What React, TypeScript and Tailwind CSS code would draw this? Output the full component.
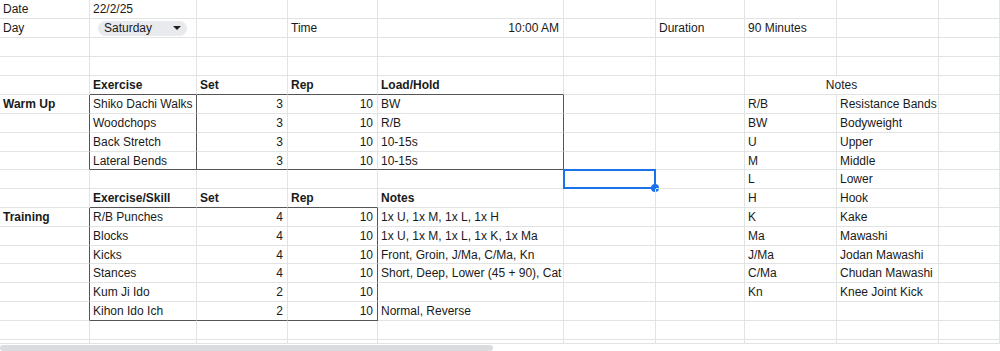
import React from "react";

type Cell = { t?: string; b?: boolean; r?: boolean };

// column widths, each includes its 1px right gridline
const colW = [
  "w-[90px]",
  "w-[107px]",
  "w-[91px]",
  "w-[90px]",
  "w-[186px]",
  "w-[92px]",
  "w-[89px]",
  "w-[92px]",
  "w-[102px]",
  "flex-1",
];

const rowH = [
  "h-[19px]", "h-[19px]", "h-[19px]", "h-[19px]", "h-[19px]", "h-[19px]",
  "h-[19px]", "h-[19px]", "h-[18px]", "h-[19px]", "h-[19px]", "h-[19px]",
  "h-[19px]", "h-[18px]", "h-[19px]", "h-[19px]", "h-[19px]", "h-[19px]",
];

const legend: [string, string][] = [
  ["R/B", "Resistance Bands"],
  ["BW", "Bodyweight"],
  ["U", "Upper"],
  ["M", "Middle"],
  ["L", "Lower"],
  ["H", "Hook"],
  ["K", "Kake"],
  ["Ma", "Mawashi"],
  ["J/Ma", "Jodan Mawashi"],
  ["C/Ma", "Chudan Mawashi"],
  ["Kn", "Knee Joint Kick"],
];

const warmUp = [
  ["Shiko Dachi Walks", "3", "10", "BW"],
  ["Woodchops", "3", "10", "R/B"],
  ["Back Stretch", "3", "10", "10-15s"],
  ["Lateral Bends", "3", "10", "10-15s"],
];

const training = [
  ["R/B Punches", "4", "10", "1x U, 1x M, 1x L, 1x H"],
  ["Blocks", "4", "10", "1x U, 1x M, 1x L, 1x K, 1x Ma"],
  ["Kicks", "4", "10", "Front, Groin, J/Ma, C/Ma, Kn"],
  ["Stances", "4", "10", "Short, Deep, Lower (45 + 90), Cat"],
  ["Kum Ji Ido", "2", "10", ""],
  ["Kihon Ido Ich", "2", "10", "Normal, Reverse"],
];

function buildRows(): Cell[][] {
  const rows: Cell[][] = Array.from({ length: 18 }, () =>
    Array.from({ length: 10 }, () => ({}))
  );
  rows[0][0] = { t: "Date" };
  rows[0][1] = { t: "22/2/25" };
  rows[1][0] = { t: "Day" };
  rows[1][3] = { t: "Time" };
  rows[1][4] = { t: "10:00 AM", r: true };
  rows[1][6] = { t: "Duration" };
  rows[1][7] = { t: "90 Minutes" };

  rows[4][1] = { t: "Exercise", b: true };
  rows[4][2] = { t: "Set", b: true };
  rows[4][3] = { t: "Rep", b: true };
  rows[4][4] = { t: "Load/Hold", b: true };
  rows[5][0] = { t: "Warm Up", b: true };
  warmUp.forEach((w, i) => {
    rows[5 + i][1] = { t: w[0] };
    rows[5 + i][2] = { t: w[1], r: true };
    rows[5 + i][3] = { t: w[2], r: true };
    rows[5 + i][4] = { t: w[3] };
  });

  rows[10][1] = { t: "Exercise/Skill", b: true };
  rows[10][2] = { t: "Set", b: true };
  rows[10][3] = { t: "Rep", b: true };
  rows[10][4] = { t: "Notes", b: true };
  rows[11][0] = { t: "Training", b: true };
  training.forEach((w, i) => {
    rows[11 + i][1] = { t: w[0] };
    rows[11 + i][2] = { t: w[1], r: true };
    rows[11 + i][3] = { t: w[2], r: true };
    rows[11 + i][4] = { t: w[3] };
  });

  legend.forEach(([k, v], i) => {
    rows[5 + i][7] = { t: k };
    rows[5 + i][8] = { t: v };
  });
  return rows;
}

const rightDark = (r: number, c: number) =>
  (r >= 5 && r <= 8 && (c === 0 || c === 1 || c === 4)) ||
  (r >= 11 && r <= 16 && (c === 0 || c === 3));

const bottomDark = (r: number, c: number) =>
  ((r === 4 || r === 8) && c >= 1 && c <= 4) ||
  ((r === 10 || r === 16) && c >= 1 && c <= 3);

const DayChip = () => (
  <div className="ml-[5px] flex h-[15px] w-[89px] items-center justify-between rounded-full bg-[#e8eaed] pl-[6px] pr-[6px]">
    <span className="text-[12px] leading-none">Saturday</span>
    <svg width="8" height="4" viewBox="0 0 8 4">
      <path d="M0 0h8L4 4z" fill="#1f1f1f" />
    </svg>
  </div>
);

const Selection = () => (
  <div className="absolute -left-[1px] -top-[1px] h-[20px] w-[93px] border-2 border-[#1a73e8]">
    <div className="absolute -bottom-[5px] -right-[5px] h-[8px] w-[8px] rounded-full bg-[#1a73e8]" />
  </div>
);

export default function App() {
  const rows = buildRows();

  return (
    <div className="h-[351px] w-[1000px] overflow-hidden bg-white font-['Liberation_Sans',Arial,sans-serif] text-[12px] text-[#1a1a1a]">
      {rows.map((row, r) => (
        <div key={r} className={`flex ${rowH[r]}`}>
          {row.map((cell, c) => {
            if (r === 4 && c === 8) return null;
            if (r === 4 && c === 7) {
              return (
                <div
                  key={c}
                  className="flex w-[194px] shrink-0 items-center justify-center border-b border-r border-b-[#e2e3e3] border-r-[#e2e3e3]"
                >
                  Notes
                </div>
              );
            }
            const br = rightDark(r, c) ? "border-r-[#555]" : "border-r-[#e2e3e3]";
            const bb = bottomDark(r, c) ? "border-b-[#555]" : "border-b-[#e2e3e3]";
            return (
              <div
                key={c}
                className={`relative flex shrink-0 items-center whitespace-nowrap border-b border-r ${colW[c]} ${br} ${bb} ${
                  cell.r ? "justify-end pr-[4px]" : "pl-[3px]"
                } ${cell.b ? "font-bold" : ""}`}
              >
                {r === 1 && c === 1 ? <DayChip /> : cell.t}
                {r === 9 && c === 5 && <Selection />}
              </div>
            );
          })}
        </div>
      ))}
      {/* partial row peeking above the scrollbar */}
      <div className="flex h-[4px]">
        {colW.map((w, c) => (
          <div key={c} className={`shrink-0 border-b border-r border-[#e2e3e3] ${w}`} />
        ))}
      </div>
      <div className="h-[7px] bg-white pt-[1px]">
        <div className="h-[6px] w-[493px] rounded-full bg-[#dadce0]" />
      </div>
    </div>
  );
}
